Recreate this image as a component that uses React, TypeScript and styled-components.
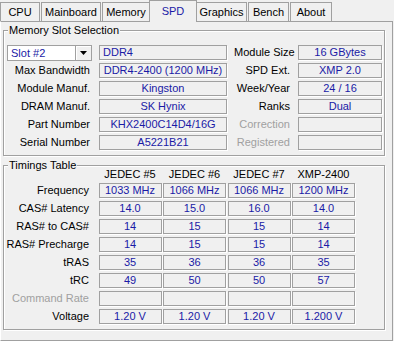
import React from "react";
import styled, { createGlobalStyle } from "styled-components";

const Global = createGlobalStyle`
  html, body { margin: 0; padding: 0; background: #f0f0f0; }
  body {
    font-family: "Liberation Sans", Arial, sans-serif;
    font-size: 11px;
    color: #000;
  }
  * { box-sizing: border-box; }
`;

const VALUE = "#1a1aa6";
const EDGE = "#a0a0a0";

const Window = styled.div`
  width: 394px;
  height: 341px;
  background: #f0f0f0;
  overflow: hidden;
`;

const TabBar = styled.div`
  display: flex;
  align-items: flex-end;
  height: 21px;
  gap: 1px;
`;

const Tab = styled.div<{ $w: number; $active?: boolean }>`
  position: relative;
  z-index: ${(p) => (p.$active ? 1 : 0)};
  width: ${(p) => p.$w + (p.$active ? 4 : 0)}px;
  height: ${(p) => (p.$active ? 22 : 19)}px;
  margin: ${(p) => (p.$active ? "0 -2px -1px" : "0")};
  padding-top: ${(p) => (p.$active ? 1 : 0)}px;
  border: 1px solid ${EDGE};
  border-bottom: none;
  background: #f0f0f0;
  color: ${(p) => (p.$active ? VALUE : "#000")};
  text-align: center;
  line-height: 18px;
  white-space: nowrap;
`;

const Page = styled.div`
  width: 393px;
  height: 320px;
  border: 1px solid ${EDGE};
  border-left-color: #fff;
  padding: 8px 0 0 2px;
  display: flex;
  flex-direction: column;
  gap: 9px;
`;

const Group = styled.section`
  position: relative;
  width: 382px;
  border: 1px solid ${EDGE};
  box-shadow: inset 1px 1px 0 #fff, 1px 1px 0 #fff;
`;

const GroupTitle = styled.span`
  position: absolute;
  top: -7px;
  left: 4px;
  padding: 0 1px;
  background: #f0f0f0;
  line-height: 13px;
  white-space: nowrap;
`;

const SlotGrid = styled.div`
  display: grid;
  grid-template-columns: 85px 128px 57px 84px;
  grid-auto-rows: 15px;
  column-gap: 7px;
  row-gap: 3px;
  padding: 14px 0 5px 3px;
`;

const Label = styled.div<{ $disabled?: boolean; $pad?: number }>`
  text-align: right;
  padding-right: ${(p) => p.$pad ?? 2}px;
  line-height: 15px;
  white-space: nowrap;
  color: ${(p) => (p.$disabled ? "#a0a0a0" : "#000")};
`;

const Field = styled.div<{ $left?: boolean }>`
  height: 15px;
  border: 1px solid ${EDGE};
  box-shadow: 1px 1px 0 #fff;
  color: ${VALUE};
  line-height: 13px;
  text-align: ${(p) => (p.$left ? "left" : "center")};
  padding: 0 ${(p) => (p.$left ? 3 : 0)}px;
  white-space: nowrap;
  overflow: hidden;
`;

const Combo = styled.div`
  height: 16px;
  display: flex;
  background: #fff;
  border: 1px solid ${EDGE};
  color: ${VALUE};
`;

const ComboText = styled.span`
  flex: 1;
  padding-left: 3px;
  line-height: 14px;
  white-space: nowrap;
`;

const DropButton = styled.span`
  width: 16px;
  display: flex;
  align-items: center;
  justify-content: center;
  background: #f0f0f0;
  border-left: 1px solid ${EDGE};
  box-shadow: inset 1px 1px 0 #fff;
`;

const TimingGrid = styled.div`
  display: grid;
  grid-template-columns: 93px repeat(4, 63px);
  grid-template-rows: 14px;
  grid-auto-rows: 15px;
  column-gap: 1.5px;
  row-gap: 3px;
  padding: 0 0 5px 0;
`;

const HeadCell = styled.div`
  text-align: center;
  line-height: 13px;
  padding-top: 2px;
  white-space: nowrap;
`;

const tabs: { name: string; w: number; active?: boolean }[] = [
  { name: "CPU", w: 40 },
  { name: "Mainboard", w: 60 },
  { name: "Memory", w: 48 },
  { name: "SPD", w: 44, active: true },
  { name: "Graphics", w: 51 },
  { name: "Bench", w: 41 },
  { name: "About", w: 42 },
];

const slotRows: { l: string; v: string; r: string; rv: string; rd?: boolean }[] = [
  { l: "Max Bandwidth", v: "DDR4-2400 (1200 MHz)", r: "SPD Ext.", rv: "XMP 2.0" },
  { l: "Module Manuf.", v: "Kingston", r: "Week/Year", rv: "24 / 16" },
  { l: "DRAM Manuf.", v: "SK Hynix", r: "Ranks", rv: "Dual" },
  { l: "Part Number", v: "KHX2400C14D4/16G", r: "Correction", rv: "", rd: true },
  { l: "Serial Number", v: "A5221B21", r: "Registered", rv: "", rd: true },
];

const headers = ["JEDEC #5", "JEDEC #6", "JEDEC #7", "XMP-2400"];

const timings: { l: string; v: string[]; d?: boolean }[] = [
  { l: "Frequency", v: ["1033 MHz", "1066 MHz", "1066 MHz", "1200 MHz"] },
  { l: "CAS# Latency", v: ["14.0", "15.0", "16.0", "14.0"] },
  { l: "RAS# to CAS#", v: ["14", "15", "15", "14"] },
  { l: "RAS# Precharge", v: ["14", "15", "15", "14"] },
  { l: "tRAS", v: ["35", "36", "36", "35"] },
  { l: "tRC", v: ["49", "50", "50", "57"] },
  { l: "Command Rate", v: ["", "", "", ""], d: true },
  { l: "Voltage", v: ["1.20 V", "1.20 V", "1.20 V", "1.200 V"] },
];

export default function App() {
  return (
    <Window>
      <Global />
      <TabBar>
        {tabs.map((t) => (
          <Tab key={t.name} $w={t.w} $active={t.active}>
            {t.name}
          </Tab>
        ))}
      </TabBar>
      <Page>
        <Group>
          <GroupTitle>Memory Slot Selection</GroupTitle>
          <SlotGrid>
            <Combo>
              <ComboText>Slot #2</ComboText>
              <DropButton>
                <svg width="7" height="4" viewBox="0 0 7 4">
                  <polygon points="0,0 7,0 3.5,4" fill="#000" />
                </svg>
              </DropButton>
            </Combo>
            <Field $left>DDR4</Field>
            <Label $pad={1}>Module Size</Label>
            <Field>16 GBytes</Field>
            {slotRows.map((r) => (
              <React.Fragment key={r.l}>
                <Label>{r.l}</Label>
                <Field>{r.v}</Field>
                <Label $pad={1} $disabled={r.rd}>
                  {r.r}
                </Label>
                <Field>{r.rv}</Field>
              </React.Fragment>
            ))}
          </SlotGrid>
        </Group>
        <Group>
          <GroupTitle>Timings Table</GroupTitle>
          <TimingGrid>
            <div />
            {headers.map((h) => (
              <HeadCell key={h}>{h}</HeadCell>
            ))}
            {timings.map((r) => (
              <React.Fragment key={r.l}>
                <Label $pad={8} $disabled={r.d}>
                  {r.l}
                </Label>
                {r.v.map((v, i) => (
                  <Field key={i}>{v}</Field>
                ))}
              </React.Fragment>
            ))}
          </TimingGrid>
        </Group>
      </Page>
    </Window>
  );
}
